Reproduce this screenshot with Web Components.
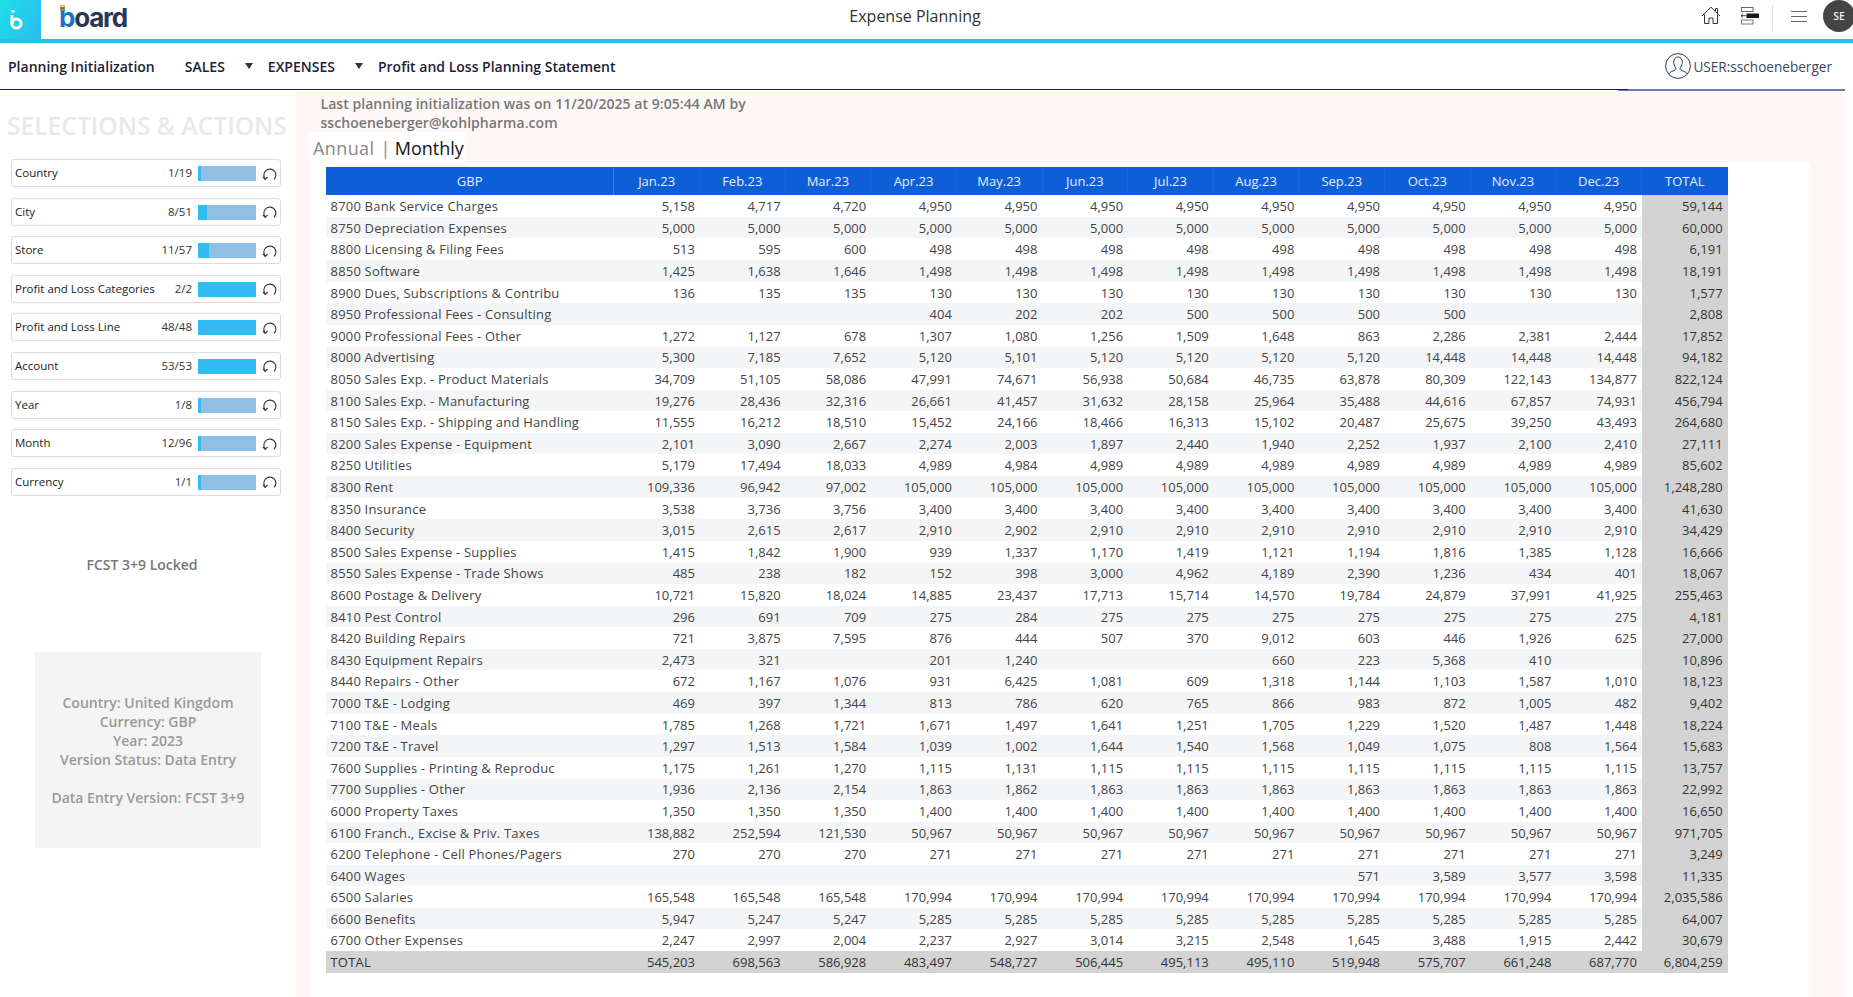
<!DOCTYPE html>
<html lang="en">
<head>
<meta charset="utf-8">
<title>Expense Planning</title>
<style>
  html, body { margin: 0; padding: 0; background: #fff; }
  body { width: 1853px; height: 997px; overflow: hidden; font-family: "Open Sans", "Liberation Sans", sans-serif; }
</style>
</head>
<body>
<expense-app></expense-app>

<script>
const define = (name, css, html, extra = {}) => {
  customElements.define(name, class extends HTMLElement {
    constructor() {
      super();
      const shadow = this.attachShadow({ mode: "open" });
      shadow.innerHTML = `<style>${css}</style>${typeof html === "function" ? html(this) : html}`;
      if (extra.ready) extra.ready(this, shadow);
    }
  });
};

define("app-header", `
  :host { display: grid; grid-template-columns: 200px 1430px 1fr; height: 39px; border-bottom: 4px solid #2fbcf0; background: #fff; overflow: hidden; }
  .left { display: flex; align-items: stretch; }
  .mark { width: 41px; box-sizing: border-box; padding-left: 10px; background: linear-gradient(120deg, #1de0e8, #30b8f0); display: flex; align-items: center; }
  .brand { display: flex; align-items: center; margin-left: 18px; position: relative; font: 700 26px/36px Inter, "Open Sans", sans-serif; letter-spacing: -1.2px; color: #2b3655; height: 36px; }
  .brand b { color: #1674c8; font-weight: 700; }
  .ticks { position: absolute; left: 1px; top: 5px; }
  .title { text-align: center; font-size: 16px; line-height: 33px; color: #333; }
  .tools { display: flex; align-items: flex-start; }
  .tools svg { display: block; flex: none; }
  .home { margin: 6px 0 0 71px; }
  .stack { margin: 7px 0 0 20px; }
  .sep { width: 1px; height: 25px; margin: 6px 0 0 13px; background: #ddd; }
  .menu { margin: 11px 0 0 18px; }
  .avatar { flex: none; width: 32px; height: 32px; margin: 0 0 0 16px; border-radius: 50%; background: #444; color: #eee; font-size: 10.5px; font-weight: 600; line-height: 32px; text-align: center; }
`, `
  <div class="left">
    <div class="mark">
      <svg width="14" height="22" viewBox="0 0 14 22" fill="none"><path d="M3 1v2.5" stroke="#fff" stroke-width="3"/><path d="M2 6v9" stroke="#fff" stroke-width="3"/><circle cx="6.5" cy="14.5" r="4.6" stroke="#fff" stroke-width="3"/></svg>
    </div>
    <div class="brand"><svg class="ticks" width="8" height="6" viewBox="0 0 8 6"><rect width="5" height="1.6" fill="#e8b93a"/><rect y="2" width="5" height="1.6" fill="#d8553f"/><rect y="4" width="5" height="1.6" fill="#63b35a"/></svg><b>b</b>oard</div>
  </div>
  <div class="title">Expense Planning</div>
  <div class="tools">
    <svg class="home" width="20" height="19" viewBox="0 0 20 19" fill="none" stroke="#333" stroke-width="1"><path d="M1 10 10 1.2 19 10"/><path d="M14.5 5V2.5H16.5V7"/><path d="M3.5 8.5V17.5H8V12H12V17.5H16.5V8.5"/></svg>
    <svg class="stack" width="18" height="18" viewBox="0 0 18 18"><rect x=".5" y=".5" width="11.5" height="4" fill="none" stroke="#666"/><rect x=".5" y="13" width="11.5" height="4" fill="none" stroke="#777"/><rect x="5.5" y="6.5" width="12.5" height="4.5" fill="#1a1a1a"/><path d="M0 8.7h5M2 6.9 0 8.7l2 1.8" fill="none" stroke="#444"/></svg>
    <div class="sep"></div>
    <svg class="menu" width="16" height="12" viewBox="0 0 16 12" stroke="#666"><path d="M0 .5h16M0 5.5h16M0 10.5h16"/></svg>
    <div class="avatar">SE</div>
  </div>
`);

define("nav-bar", `
  :host { display: block; background: #fff; }
  .bar { display: flex; align-items: center; height: 46px; color: #1c2233; font-size: 14px; font-weight: 600; }
  .item { white-space: nowrap; }
  .caret { width: 0; height: 0; border: 4px solid transparent; border-top: 6px solid #333; border-bottom: 0; }
  .user { margin-left: auto; margin-right: 21px; display: flex; align-items: center; gap: 2px; font-size: 13.6px; font-weight: 400; color: #3c4560; }
  .rule { display: flex; height: 2px; width: 1845px; }
  .a { width: 1618px; border-top: 1px solid #16245a; }
  .b { width: 10px; background: linear-gradient(#16245a 50%, #6b7ba8 50%); }
  .c { flex: 1; background: #6b7ba8; }
`, `
  <div class="bar">
    <span class="item" style="margin-left:8px">Planning Initialization</span>
    <span class="item" style="margin-left:30px">SALES</span>
    <span class="caret" style="margin-left:20px"></span>
    <span class="item" style="margin-left:15px">EXPENSES</span>
    <span class="caret" style="margin-left:20px"></span>
    <span class="item" style="margin-left:15px">Profit and Loss Planning Statement</span>
    <span class="user">
      <svg width="26" height="26" viewBox="0 0 26 26" fill="none" stroke="#2f3a58" stroke-width="1"><circle cx="13" cy="13" r="12.4"/><path d="M3.6 21c1.2-2.4 5-3 6.8-4.2.9-.7.6-1.8 0-2.6-1.1-1.4-1.7-3-1.7-5 0-3 1.8-5.2 4.3-5.2s4.3 2.2 4.3 5.2c0 2-.6 3.6-1.7 5-.6.8-.9 1.9 0 2.6 1.8 1.2 5.6 1.8 6.8 4.2"/></svg>
      USER:sschoeneberger
    </span>
  </div>
  <div class="rule"><div class="a"></div><div class="b"></div><div class="c"></div></div>
`);

define("selector-row", `
  :host { display: flex; align-items: center; box-sizing: border-box; height: 28px; border: 1px solid #dcdcdc; border-radius: 3px; padding-left: 3px; font-size: 11.5px; color: #222; background: #fff; }
  .label { white-space: nowrap; padding-bottom: 1px; }
  .count { margin-left: auto; color: #333; padding-bottom: 1px; }
  .bar { width: 58px; height: 15px; margin-left: 6px; background: #90bfe6; flex: none; margin-top: 1px; }
  .bar i { display: block; height: 100%; background: #31bdf2; }
  svg { flex: none; margin: 2px 3px 0 6px; }
`, (el) => `
  <span class="label">${el.getAttribute("label")}</span>
  <span class="count">${el.getAttribute("count")}</span>
  <div class="bar"><i style="width:${el.getAttribute("fill")}px"></i></div>
  <svg width="15" height="15" viewBox="0 0 15 15" fill="none" stroke="#333" stroke-width="1.1"><path d="M3.3 12A6 6 0 1 1 12 12.4"/><path d="M.9 9.8 3.2 12.4 5.6 10"/></svg>
`);

define("side-panel", `
  :host { display: block; width: 296px; height: 906px; box-sizing: border-box; padding: 18px 0 0 11px; background: #fff; }
  h2 { margin: 0 0 16px -4px; font-size: 24.6px; line-height: 34px; font-weight: 600; color: #e9e9e9; white-space: nowrap; }
  .list { display: flex; flex-direction: column; gap: 10.6px; width: 270px; }
  .locked { width: 262px; margin: 59px 0 0 0; text-align: center; font-size: 14px; line-height: 19px; font-weight: 600; color: #777; }
  .info { box-sizing: border-box; width: 226px; height: 196px; margin: 78px 0 0 24px; padding-top: 41px; background: #f4f4f4; text-align: center; font-size: 14px; line-height: 19px; font-weight: 600; color: #999; }
`, `
  <h2>SELECTIONS &amp; ACTIONS</h2>
  <div class="list"><slot></slot></div>
  <div class="locked">FCST 3+9 Locked</div>
  <div class="info">Country: United Kingdom<br>Currency: GBP<br>Year: 2023<br>Version Status: Data Entry<br><br>Data Entry Version: FCST 3+9</div>
`);

const COLS = "288.3px repeat(13, 85.65px)";

define("plan-row", `
  :host { display: grid; grid-template-columns: ${COLS}; height: 21.6px; font-size: 13px; line-height: 21px; color: #444; background: #fff; }
  :host(:nth-child(even)) { background: #f4f5f7; }
  :host([total]) { background: #d3d3d3; color: #333; }
  div { box-sizing: border-box; padding-top: 1px; text-align: right; padding-right: 5px; white-space: nowrap; overflow: hidden; }
  .name { text-align: left; padding-left: 4.5px; padding-right: 0; letter-spacing: .2px; }
  .sum { background: #d3d3d3; color: #333; }
`, (el) => {
  const v = el.getAttribute("values").split("|");
  return `<div class="name">${el.getAttribute("label").replace("&", "&amp;")}</div>` +
    v.map((x, i) => `<div class="${i === 12 ? "sum" : ""}">${x}</div>`).join("");
});

const rep = (x, n) => Array(n).fill(x).join("|");
const ROWS = [
  ["8700 Bank Service Charges", `5,158|4,717|4,720|${rep("4,950", 9)}|59,144`],
  ["8750 Depreciation Expenses", `${rep("5,000", 12)}|60,000`],
  ["8800 Licensing & Filing Fees", `513|595|600|${rep("498", 9)}|6,191`],
  ["8850 Software", `1,425|1,638|1,646|${rep("1,498", 9)}|18,191`],
  ["8900 Dues, Subscriptions & Contribu", `136|135|135|${rep("130", 9)}|1,577`],
  ["8950 Professional Fees - Consulting", "|||404|202|202|500|500|500|500|||2,808"],
  ["9000 Professional Fees - Other", "1,272|1,127|678|1,307|1,080|1,256|1,509|1,648|863|2,286|2,381|2,444|17,852"],
  ["8000 Advertising", "5,300|7,185|7,652|5,120|5,101|5,120|5,120|5,120|5,120|14,448|14,448|14,448|94,182"],
  ["8050 Sales Exp. - Product Materials", "34,709|51,105|58,086|47,991|74,671|56,938|50,684|46,735|63,878|80,309|122,143|134,877|822,124"],
  ["8100 Sales Exp. - Manufacturing", "19,276|28,436|32,316|26,661|41,457|31,632|28,158|25,964|35,488|44,616|67,857|74,931|456,794"],
  ["8150 Sales Exp. - Shipping and Handling", "11,555|16,212|18,510|15,452|24,166|18,466|16,313|15,102|20,487|25,675|39,250|43,493|264,680"],
  ["8200 Sales Expense - Equipment", "2,101|3,090|2,667|2,274|2,003|1,897|2,440|1,940|2,252|1,937|2,100|2,410|27,111"],
  ["8250 Utilities", `5,179|17,494|18,033|4,989|4,984|${rep("4,989", 7)}|85,602`],
  ["8300 Rent", `109,336|96,942|97,002|${rep("105,000", 9)}|1,248,280`],
  ["8350 Insurance", `3,538|3,736|3,756|${rep("3,400", 9)}|41,630`],
  ["8400 Security", `3,015|2,615|2,617|2,910|2,902|${rep("2,910", 7)}|34,429`],
  ["8500 Sales Expense - Supplies", "1,415|1,842|1,900|939|1,337|1,170|1,419|1,121|1,194|1,816|1,385|1,128|16,666"],
  ["8550 Sales Expense - Trade Shows", "485|238|182|152|398|3,000|4,962|4,189|2,390|1,236|434|401|18,067"],
  ["8600 Postage & Delivery", "10,721|15,820|18,024|14,885|23,437|17,713|15,714|14,570|19,784|24,879|37,991|41,925|255,463"],
  ["8410 Pest Control", `296|691|709|275|284|${rep("275", 7)}|4,181`],
  ["8420 Building Repairs", "721|3,875|7,595|876|444|507|370|9,012|603|446|1,926|625|27,000"],
  ["8430 Equipment Repairs", "2,473|321||201|1,240|||660|223|5,368|410||10,896"],
  ["8440 Repairs - Other", "672|1,167|1,076|931|6,425|1,081|609|1,318|1,144|1,103|1,587|1,010|18,123"],
  ["7000 T&E - Lodging", "469|397|1,344|813|786|620|765|866|983|872|1,005|482|9,402"],
  ["7100 T&E - Meals", "1,785|1,268|1,721|1,671|1,497|1,641|1,251|1,705|1,229|1,520|1,487|1,448|18,224"],
  ["7200 T&E - Travel", "1,297|1,513|1,584|1,039|1,002|1,644|1,540|1,568|1,049|1,075|808|1,564|15,683"],
  ["7600 Supplies - Printing & Reproduc", `1,175|1,261|1,270|1,115|1,131|${rep("1,115", 7)}|13,757`],
  ["7700 Supplies - Other", `1,936|2,136|2,154|1,863|1,862|${rep("1,863", 7)}|22,992`],
  ["6000 Property Taxes", `${rep("1,350", 3)}|${rep("1,400", 9)}|16,650`],
  ["6100 Franch., Excise & Priv. Taxes", `138,882|252,594|121,530|${rep("50,967", 9)}|971,705`],
  ["6200 Telephone - Cell Phones/Pagers", `${rep("270", 3)}|${rep("271", 9)}|3,249`],
  ["6400 Wages", "||||||||571|3,589|3,577|3,598|11,335"],
  ["6500 Salaries", `${rep("165,548", 3)}|${rep("170,994", 9)}|2,035,586`],
  ["6600 Benefits", `5,947|5,247|5,247|${rep("5,285", 9)}|64,007`],
  ["6700 Other Expenses", "2,247|2,997|2,004|2,237|2,927|3,014|3,215|2,548|1,645|3,488|1,915|2,442|30,679"],
];
const TOTALS = "545,203|698,563|586,928|483,497|548,727|506,445|495,113|495,110|519,948|575,707|661,248|687,770|6,804,259";
const MONTHS = ["Jan", "Feb", "Mar", "Apr", "May", "Jun", "Jul", "Aug", "Sep", "Oct", "Nov", "Dec"];

define("plan-table", `
  :host { display: block; width: 1402px; }
  .head { display: grid; grid-template-columns: ${COLS}; height: 28.3px; background: #0d5fd8; color: #e6eefa; font-size: 13px; line-height: 28px; text-align: center; }
  .head div { border-right: 1px solid #1766da; box-sizing: border-box; }
  .head div:first-child { border-right-color: #3a7ee2; }
  .head div:last-child { border-right: 0; }
  .body { display: block; }
`, () => {
  const esc = (s) => s.replace(/&/g, "&amp;").replace(/"/g, "&quot;");
  const head = ["GBP", ...MONTHS.map((m) => `${m}.23`), "TOTAL"].map((t) => `<div>${t}</div>`).join("");
  const rows = ROWS.map(([l, v]) => `<plan-row label="${esc(l)}" values="${v}"></plan-row>`).join("");
  return `<div class="head">${head}</div><div class="body">${rows}<plan-row total label="TOTAL" values="${TOTALS}"></plan-row></div>`;
});

define("plan-view", `
  :host { display: block; box-sizing: border-box; width: 1549px; height: 906px; padding: 3px 0 0 14px; background: #fdf8f6; overflow: hidden; }
  .note { margin-left: 10.5px; font-size: 14px; line-height: 19px; font-weight: 600; color: #777; letter-spacing: .05px; }
  .tabs { display: inline-flex; align-items: center; gap: 6px; height: 30px; width: 157px; box-sizing: border-box; margin: 0 0 0 -1px; padding: 2px 0 0 4px; background: #fff; font-size: 18px; color: #888; vertical-align: top; letter-spacing: .4px; }
  .tabs b { font-weight: 400; color: #111; margin-left: -2px; letter-spacing: 0; }
  .tabrow { height: 30px; }
  .panel { box-sizing: border-box; width: 1500px; height: 840px; padding: 5px 0 0 16px; background: #fff; }
`, `
  <div class="note">Last planning initialization was on 11/20/2025 at 9:05:44 AM by<br>sschoeneberger@kohlpharma.com</div>
  <div class="tabrow"><div class="tabs">Annual <span>|</span> <b>Monthly</b></div></div>
  <div class="panel"><plan-table></plan-table></div>
`);

define("expense-app", `
  :host { display: block; width: 1853px; height: 997px; overflow: hidden; }
  main { display: flex; }
`, `
  <app-header></app-header>
  <nav-bar></nav-bar>
  <main>
    <side-panel>
      <selector-row label="Country" count="1/19" fill="3"></selector-row>
      <selector-row label="City" count="8/51" fill="9"></selector-row>
      <selector-row label="Store" count="11/57" fill="11"></selector-row>
      <selector-row label="Profit and Loss Categories" count="2/2" fill="58"></selector-row>
      <selector-row label="Profit and Loss Line" count="48/48" fill="58"></selector-row>
      <selector-row label="Account" count="53/53" fill="58"></selector-row>
      <selector-row label="Year" count="1/8" fill="3"></selector-row>
      <selector-row label="Month" count="12/96" fill="3"></selector-row>
      <selector-row label="Currency" count="1/1" fill="3"></selector-row>
    </side-panel>
    <plan-view></plan-view>
  </main>
`);
</script>
</body>
</html>
